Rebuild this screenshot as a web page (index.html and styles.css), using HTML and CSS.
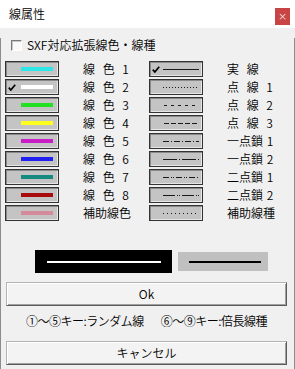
FILE: index.html
```html
<!DOCTYPE html>
<html lang="ja">
<head>
<meta charset="utf-8">
<link rel="stylesheet" href="styles.css">
</head>
<body>
<div class="titlebar"><span class="title">線属性</span><span class="close">×</span></div>
<div class="panel">
  <div class="sxf"><span class="cb"></span><span>SXF対応拡張線色・線種</span></div>
  <div class="grid">
    <div class="col">
      <div class="row"><span class="btn"><span class="bar c1"></span></span><span class="lbl sp">線 色 1</span></div>
      <div class="row"><span class="btn"><svg class="chk" width="8" height="7" viewBox="0 0 8 7"><path d="M0.8 3.6 L2.8 6 L7.2 0.8" fill="none" stroke="#000" stroke-width="1.7"/></svg><span class="bar c2"></span></span><span class="lbl sp">線 色 2</span></div>
      <div class="row"><span class="btn"><span class="bar c3"></span></span><span class="lbl sp">線 色 3</span></div>
      <div class="row"><span class="btn"><span class="bar c4"></span></span><span class="lbl sp">線 色 4</span></div>
      <div class="row"><span class="btn"><span class="bar c5"></span></span><span class="lbl sp">線 色 5</span></div>
      <div class="row"><span class="btn"><span class="bar c6"></span></span><span class="lbl sp">線 色 6</span></div>
      <div class="row"><span class="btn"><span class="bar c7"></span></span><span class="lbl sp">線 色 7</span></div>
      <div class="row"><span class="btn"><span class="bar c8"></span></span><span class="lbl sp">線 色 8</span></div>
      <div class="row"><span class="btn"><span class="bar c9"></span></span><span class="lbl">補助線色</span></div>
    </div>
    <div class="col">
      <div class="row"><span class="btn"><svg class="chk" width="8" height="7" viewBox="0 0 8 7"><path d="M0.8 3.6 L2.8 6 L7.2 0.8" fill="none" stroke="#000" stroke-width="1.7"/></svg><svg class="pat" width="36" height="3"><line x1="0" y1="1.5" x2="36" y2="1.5"/></svg></span><span class="lbl sp">実 線</span></div>
      <div class="row"><span class="btn"><svg class="pat" width="36" height="3"><line x1="0" y1="1.5" x2="36" y2="1.5" stroke-dasharray="1 2"/></svg></span><span class="lbl sp">点 線 1</span></div>
      <div class="row"><span class="btn"><svg class="pat" width="36" height="3"><line x1="1" y1="1.5" x2="36" y2="1.5" stroke-dasharray="3 4"/></svg></span><span class="lbl sp">点 線 2</span></div>
      <div class="row"><span class="btn"><svg class="pat" width="36" height="3"><line x1="1" y1="1.5" x2="36" y2="1.5" stroke-dasharray="5 2"/></svg></span><span class="lbl sp">点 線 3</span></div>
      <div class="row"><span class="btn"><svg class="pat" width="36" height="3"><line x1="0" y1="1.5" x2="36" y2="1.5" stroke-dasharray="6 2 1 2"/></svg></span><span class="lbl ch">一点鎖 1</span></div>
      <div class="row"><span class="btn"><svg class="pat" width="36" height="3"><line x1="0" y1="1.5" x2="36" y2="1.5" stroke-dasharray="14 2 1 2"/></svg></span><span class="lbl ch">一点鎖 2</span></div>
      <div class="row"><span class="btn"><svg class="pat" width="36" height="3"><line x1="0" y1="1.5" x2="36" y2="1.5" stroke-dasharray="6 2 1 1 1 2"/></svg></span><span class="lbl ch">二点鎖 1</span></div>
      <div class="row"><span class="btn"><svg class="pat" width="36" height="3"><line x1="0" y1="1.5" x2="36" y2="1.5" stroke-dasharray="12 2 1 1 1 2"/></svg></span><span class="lbl ch">二点鎖 2</span></div>
      <div class="row"><span class="btn"><svg class="pat" width="36" height="3"><line x1="0" y1="1.5" x2="36" y2="1.5" stroke-dasharray="1 3"/></svg></span><span class="lbl">補助線種</span></div>
    </div>
  </div>
  <div class="preview">
    <div class="pv-dark"><span class="pv-line white"></span></div>
    <div class="pv-light"><span class="pv-line black"></span></div>
  </div>
  <div class="wbtn ok">Ok</div>
  <div class="hint">①～⑤キー:ランダム線<span class="hgap"></span>⑥～⑨キー:倍長線種</div>
  <div class="wbtn cancel">キャンセル</div>
</div>
</body>
</html>
```

FILE: styles.css
```css
* { box-sizing: border-box; }
html, body { margin: 0; padding: 0; }
body {
  width: 295px;
  height: 369px;
  overflow: hidden;
  background: #f0f0f0;
  font-family: "Noto Sans CJK JP", "Noto Sans", sans-serif;
  font-size: 12px;
  font-weight: 350;
  line-height: 14px;
  color: #000;
}
.titlebar {
  height: 28px;
  background: #fff;
  display: flex;
  justify-content: space-between;
  align-items: center;
  padding: 0 5px 0 9px;
}
.title { font-size: 12px; }
.close {
  align-self: flex-start;
  margin-top: 8px;
  width: 15px;
  height: 17px;
  background: #c94545;
  color: #fff;
  font-size: 11px;
  line-height: 17px;
  text-align: center;
  font-family: "DejaVu Sans", sans-serif;
}
.panel {
  height: 341px;
  border-left: 1px solid #8c8c8c;
  border-right: 1px solid #8c8c8c;
  border-bottom: 1px solid #8c8c8c;
  padding: 0 0 0 4px;
}
.sxf {
  display: flex;
  align-items: center;
  height: 14px;
  margin: 10px 0 0 6px;
  gap: 5px;
}
.cb {
  width: 11px;
  height: 11px;
  background: #fafafa;
  border-top: 1px solid #7a7a7a;
  border-left: 1px solid #7a7a7a;
  border-right: 1px solid #fff;
  border-bottom: 1px solid #fff;
  box-shadow: inset 1px 1px 0 #c8c8c8;
}
.grid {
  display: flex;
  margin-top: 9px;
}
.col {
  width: 144px;
  display: flex;
  flex-direction: column;
  gap: 2px;
}
.row {
  display: flex;
  align-items: center;
  height: 16px;
}
.btn {
  width: 54px;
  height: 16px;
  background: #c4c4c4;
  border: 1px solid #333;
  box-shadow: inset 1px 1px 0 #8a8a8a, inset -1px -1px 0 #e6e6e6;
  display: flex;
  align-items: center;
  justify-content: flex-end;
  padding: 0 5px 0 2px;
}
.chk { margin-right: auto; margin-top: 1px; }
.bar { width: 32px; height: 4px; }
.c1 { background: #2de6e8; }
.c2 { background: #ffffff; }
.c3 { background: #22e022; }
.c4 { background: #ffff20; }
.c5 { background: #c81ec8; }
.c6 { background: #2020f0; }
.c7 { background: #168a80; }
.c8 { background: #a80c0c; }
.c9 { background: #d48a98; }
.pat { margin-right: -2px; }
.pat line { stroke: #1a1a1a; stroke-width: 1; }
.lbl { margin-left: 24px; white-space: pre; }
.sp { letter-spacing: 2.5px; }
.ch { word-spacing: 1px; }
.preview {
  display: flex;
  align-items: center;
  gap: 6px;
  margin: 29px 0 0 30px;
}
.pv-dark {
  width: 137px;
  height: 23px;
  background: #000;
  display: flex;
  align-items: center;
  padding: 0 11px 0 12px;
}
.pv-light {
  width: 90px;
  height: 19px;
  background: #c0c0c0;
  display: flex;
  align-items: center;
  padding: 0 7px 0 11px;
}
.pv-line { flex: 1; height: 2px; }
.white { background: #fff; }
.black { background: #000; }
.wbtn {
  width: 281px;
  height: 24px;
  margin-left: 1px;
  background: #f3f3f3;
  border: 1px solid;
  border-color: #b4b4b4 #5a5a5a #5a5a5a #b4b4b4;
  box-shadow: inset 1px 1px 0 #fff, inset -1px -1px 0 #a0a0a0;
  display: flex;
  align-items: center;
  justify-content: center;
}
.ok { margin-top: 9px; }
.hint {
  margin-top: 8px;
  text-align: center;
  padding-right: 6px;
  letter-spacing: -0.5px;
}
.hgap { display: inline-block; width: 17px; }
.cancel { margin-top: 13px; }
```
